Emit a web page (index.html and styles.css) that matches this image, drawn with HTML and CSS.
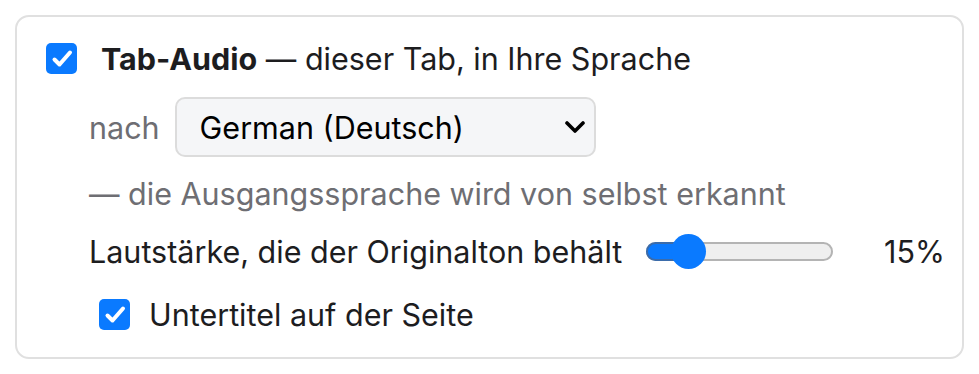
FILE: index.html
```html
<!DOCTYPE html>
<html lang="de">
<head>
<meta charset="UTF-8">
<title>Tab-Audio</title>
<link rel="stylesheet" href="styles.css">
</head>
<body>
    <div class="card">
        <div class="row title-row">
            <span class="check">
                <svg viewBox="0 0 31 31" width="31" height="31"><path d="M8.5 16.5l5 5L24 9.5" fill="none" stroke="#fff" stroke-width="4" stroke-linecap="round" stroke-linejoin="round"/></svg>
            </span>
            <span class="title"><b>Tab-Audio</b> — dieser Tab, in Ihre Sprache</span>
        </div>

        <div class="row lang-row">
            <span class="muted">nach</span>
            <div class="select">
                <span>German (Deutsch)</span>
                <svg viewBox="0 0 20 12" width="20" height="12"><path d="M2 2l8 8 8-8" fill="none" stroke="#000" stroke-width="3.6" stroke-linecap="round" stroke-linejoin="round"/></svg>
            </div>
        </div>

        <p class="muted hint">— die Ausgangssprache wird von selbst erkannt</p>

        <div class="row volume-row">
            <span>Lautstärke, die der Originalton behält</span>
            <div class="slider">
                <div class="fill"></div>
                <div class="thumb"></div>
            </div>
            <span class="value">15%</span>
        </div>

        <div class="row sub-row">
            <span class="check">
                <svg viewBox="0 0 31 31" width="31" height="31"><path d="M8.5 16.5l5 5L24 9.5" fill="none" stroke="#fff" stroke-width="4" stroke-linecap="round" stroke-linejoin="round"/></svg>
            </span>
            <span>Untertitel auf der Seite</span>
        </div>
    </div>
</body>
</html>
```

FILE: styles.css
```css
body {
    margin: 0;
    padding: 15px;
    background: #fff;
    font-family: Inter, "Noto Sans", sans-serif;
    font-size: 30.5px;
    line-height: 37px;
    color: #1d1d1f;
}

.card {
    width: 949px;
    box-sizing: border-box;
    height: 344px;
    border: 2px solid #e0e0e0;
    border-radius: 14px;
    padding: 23px 17px 0 29px;
}

.row {
    display: flex;
    align-items: center;
}

.check {
    width: 31px;
    height: 31px;
    border-radius: 5px;
    background: #0a7aff;
    display: flex;
    flex-shrink: 0;
}

.title {
    margin-left: 24px;
}

.title b {
    font-weight: 700;
}

.muted {
    color: #6e6e73;
}

.lang-row {
    margin-top: 20px;
    padding-left: 43px;
}

.select {
    margin-left: 15px;
    width: 421px;
    height: 60px;
    box-sizing: border-box;
    border: 2px solid #dcdcdc;
    border-radius: 10px;
    background: #f5f6f8;
    display: flex;
    align-items: center;
    justify-content: space-between;
    padding: 0 9px 0 23px;
    color: #000;
}

.hint {
    margin: 18px 0 0 43px;
}

.volume-row {
    margin-top: 21px;
    padding-left: 43px;
}

.slider {
    position: relative;
    margin-left: 24px;
    width: 187px;
    height: 19px;
    box-sizing: border-box;
    border: 2px solid #b4b4b4;
    border-radius: 10px;
    background: #efefef;
}

.fill {
    position: absolute;
    left: -2px;
    top: -2px;
    width: 45px;
    height: 19px;
    box-sizing: border-box;
    border: 2px solid #3b6cab;
    border-radius: 10px;
    background: #0a7aff;
}

.thumb {
    position: absolute;
    left: 23px;
    top: -10px;
    width: 35px;
    height: 35px;
    border-radius: 50%;
    background: #0a7aff;
}

.value {
    margin-left: auto;
}

.sub-row {
    margin-top: 26px;
    padding-left: 53px;
}

.sub-row span:last-child {
    margin-left: 19px;
}
```
